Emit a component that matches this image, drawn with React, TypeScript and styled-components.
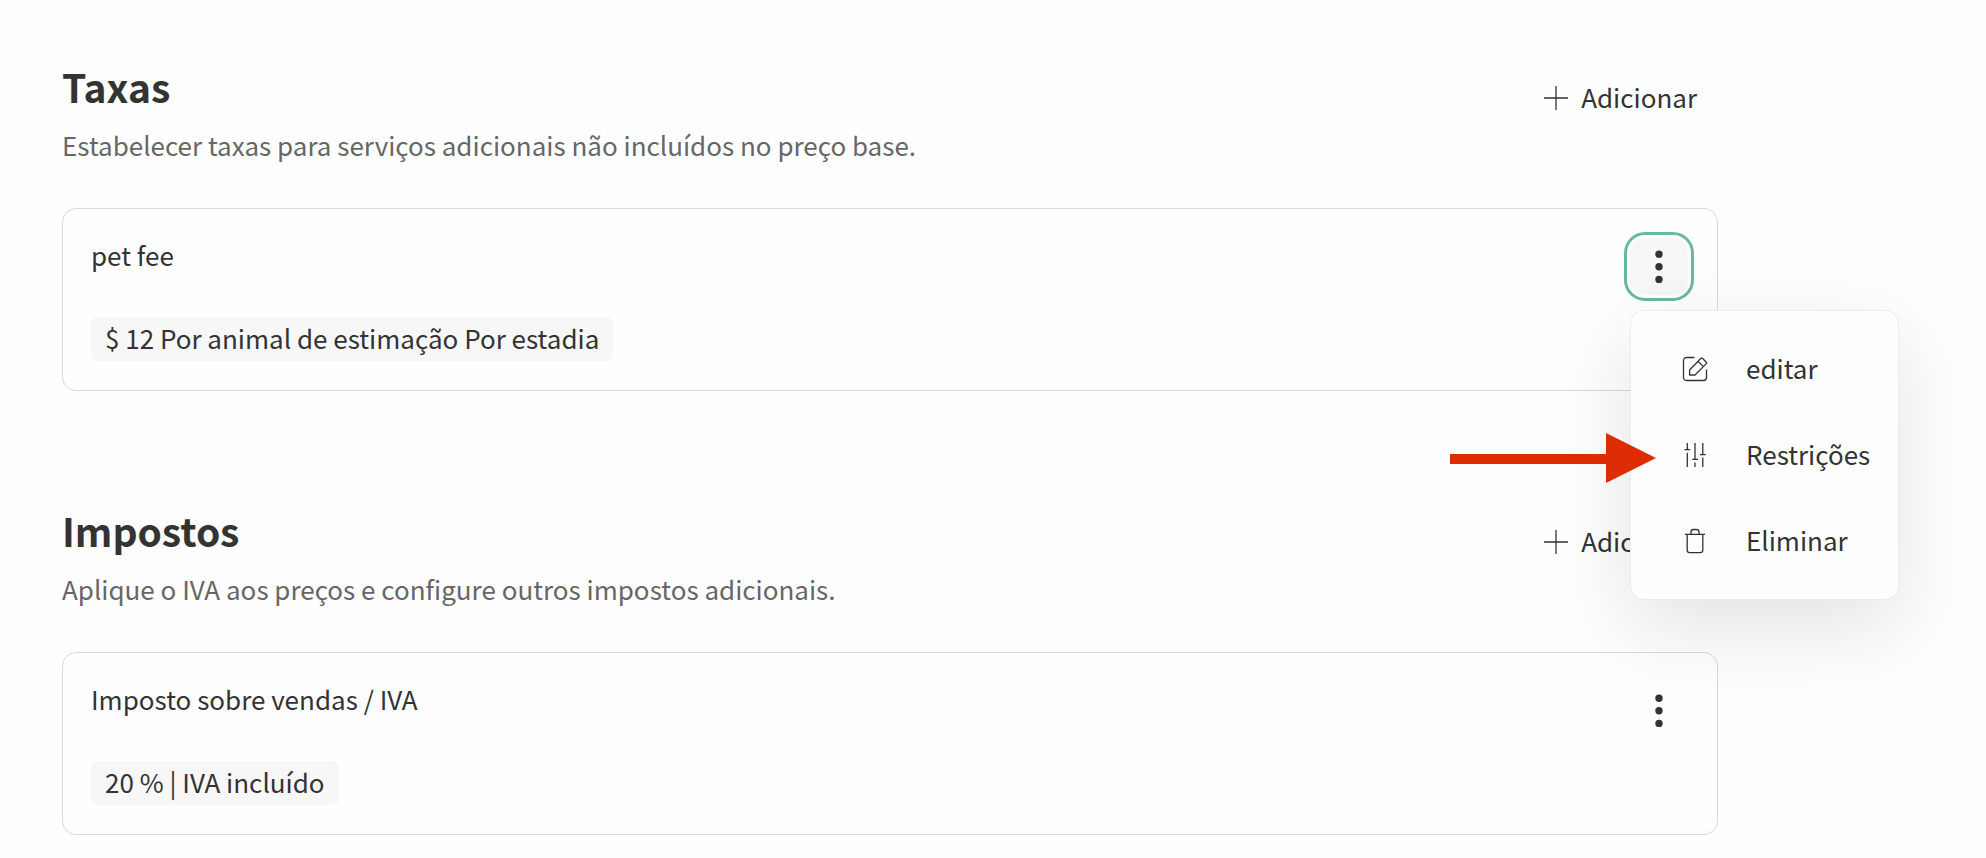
import React from "react";
import styled, { createGlobalStyle } from "styled-components";

const GlobalStyle = createGlobalStyle`
  *, *::before, *::after { box-sizing: border-box; }
  body {
    margin: 0;
    background: #fefefe;
    color: #333;
    font-family: "Source Sans Pro", "Noto Sans CJK JP", "Noto Sans", sans-serif;
    font-size: 26px;
    line-height: 34px;
  }
  button { font: inherit; color: inherit; }
`;

const Page = styled.main`
  display: flex;
  flex-direction: column;
  gap: 111px;
  padding: 58px 268px 22px 62px;
`;

const SectionHeader = styled.header`
  display: flex;
  justify-content: space-between;
  align-items: flex-start;
  margin-bottom: 42px;
`;

const Heading = styled.h2`
  margin: 0 0 10px;
  font-size: 39px;
  line-height: 56px;
  font-weight: 700;
`;

const Description = styled.p`
  margin: 0;
  line-height: 42px;
  color: #666;
`;

const AddButton = styled.button`
  display: flex;
  align-items: center;
  gap: 12px;
  padding: 22px 21px;
  border: 0;
  background: none;
  white-space: nowrap;
  cursor: pointer;
`;

const Card = styled.article`
  display: flex;
  justify-content: space-between;
  align-items: flex-start;
  padding: 29px 29px 29px 28px;
  border: 1px solid #d9d9d9;
  border-radius: 14px;
`;

const CardBody = styled.div`
  display: flex;
  flex-direction: column;
  align-items: flex-start;
  gap: 45px;
`;

const CardTitle = styled.h3`
  margin: 0;
  font-size: 26px;
  line-height: 34px;
  font-weight: 400;
`;

const Tag = styled.span`
  padding: 4px 14px 6px;
  border-radius: 7px;
  background: #f7f7f7;
`;

const MenuAnchor = styled.div`
  position: relative;
`;

const KebabButton = styled.button<{ $open: boolean }>`
  display: flex;
  align-items: center;
  justify-content: center;
  width: 58px;
  height: 57px;
  padding: 0;
  border: 0;
  border-radius: 15px;
  background: ${(p) => (p.$open ? "#f7f7f7" : "transparent")};
  outline: ${(p) => (p.$open ? "3px solid #68ba9b" : "none")};
  outline-offset: 3px;
  cursor: pointer;
`;

const Menu = styled.div`
  position: absolute;
  z-index: 1;
  top: 72px;
  left: 0;
  width: 269px;
  padding: 15px 0;
  border: 1px solid #ececec;
  border-radius: 14px;
  background: #fefefe;
  box-shadow: 0 28px 84px rgba(0, 0, 0, 0.11);
`;

const MenuItem = styled.button`
  position: relative;
  display: flex;
  align-items: center;
  gap: 38px;
  width: 100%;
  height: 86px;
  padding: 0 0 2px 51px;
  border: 0;
  background: none;
  text-align: left;
  cursor: pointer;
`;

const Pointer = styled.svg`
  position: absolute;
  top: 21px;
  right: 242px;
`;

const Icon = styled.svg`
  flex: none;
  width: 26px;
  height: 26px;
  margin-top: 2px;
  fill: none;
  stroke: #333;
  stroke-width: 1.3;
  stroke-linejoin: round;
`;

const PlusIcon = () => (
  <Icon viewBox="-1 -1 26 26" aria-hidden>
    <path d="M12 0V24M0 12H24" />
  </Icon>
);

const EditIcon = () => (
  <Icon viewBox="-1 -1 26 26" aria-hidden>
    <path d="M11.5 .5H3.5a3 3 0 0 0-3 3v17a3 3 0 0 0 3 3h17a3 3 0 0 0 3-3V12.5" />
    <path d="M6.6 13 18 1.2a1 1 0 0 1 1.4 0l3.9 4a1 1 0 0 1 0 1.4L12 18H6.6ZM15 4.2l5.3 5.4" />
  </Icon>
);

const SlidersIcon = () => (
  <Icon viewBox="-1 -1 26 26" aria-hidden>
    <path d="M4.3 0V6.6M1.5 6.6H7.2M4.3 9.8V24M12 0V16.4M9.2 16.4H15M12 19.4V24M19.8 0V11.6M17 11.6H22.7M19.8 14.6V24" />
  </Icon>
);

const TrashIcon = () => (
  <Icon viewBox="-1 -1 26 26" aria-hidden>
    <path d="M2 5.3H22M4.2 5.3V21.3a2.4 2.4 0 0 0 2.4 2.4H17.4a2.4 2.4 0 0 0 2.4-2.4V5.3M8 5.3V3a2.5 2.5 0 0 1 2.5-2.5h3A2.5 2.5 0 0 1 16 3V5.3" />
  </Icon>
);

const KebabIcon = () => (
  <svg width="8" height="34" viewBox="0 0 8 34" fill="#333" aria-hidden>
    <circle cx="4" cy="4.2" r="3.7" />
    <circle cx="4" cy="16.8" r="3.7" />
    <circle cx="4" cy="29.4" r="3.7" />
  </svg>
);

const PointerArrow = () => (
  <Pointer width="206" height="50" viewBox="0 0 206 50" fill="#dd2c04" aria-hidden>
    <path d="M0 21H156V0L206 25L156 50V31H0Z" />
  </Pointer>
);

type ChargeSectionProps = {
  id: string;
  title: string;
  description: string;
  item: string;
  detail: string;
  children?: React.ReactNode;
};

const ChargeSection = ({ id, title, description, item, detail, children }: ChargeSectionProps) => (
  <section aria-labelledby={id}>
    <SectionHeader>
      <div>
        <Heading id={id}>{title}</Heading>
        <Description>{description}</Description>
      </div>
      <AddButton type="button">
        <PlusIcon />
        Adicionar
      </AddButton>
    </SectionHeader>
    <Card>
      <CardBody>
        <CardTitle>{item}</CardTitle>
        <Tag>{detail}</Tag>
      </CardBody>
      <MenuAnchor>
        <KebabButton type="button" $open={!!children} aria-haspopup="menu" aria-expanded={!!children} aria-label={item}>
          <KebabIcon />
        </KebabButton>
        {children}
      </MenuAnchor>
    </Card>
  </section>
);

export default function App() {
  return (
    <>
      <GlobalStyle />
      <Page>
        <ChargeSection
          id="taxas"
          title="Taxas"
          description="Estabelecer taxas para serviços adicionais não incluídos no preço base."
          item="pet fee"
          detail="$ 12 Por animal de estimação Por estadia"
        >
          <Menu role="menu">
            <MenuItem type="button" role="menuitem">
              <EditIcon />
              editar
            </MenuItem>
            <MenuItem type="button" role="menuitem">
              <PointerArrow />
              <SlidersIcon />
              Restrições
            </MenuItem>
            <MenuItem type="button" role="menuitem">
              <TrashIcon />
              Eliminar
            </MenuItem>
          </Menu>
        </ChargeSection>
        <ChargeSection
          id="impostos"
          title="Impostos"
          description="Aplique o IVA aos preços e configure outros impostos adicionais."
          item="Imposto sobre vendas / IVA"
          detail="20 % | IVA incluído"
        />
      </Page>
    </>
  );
}
